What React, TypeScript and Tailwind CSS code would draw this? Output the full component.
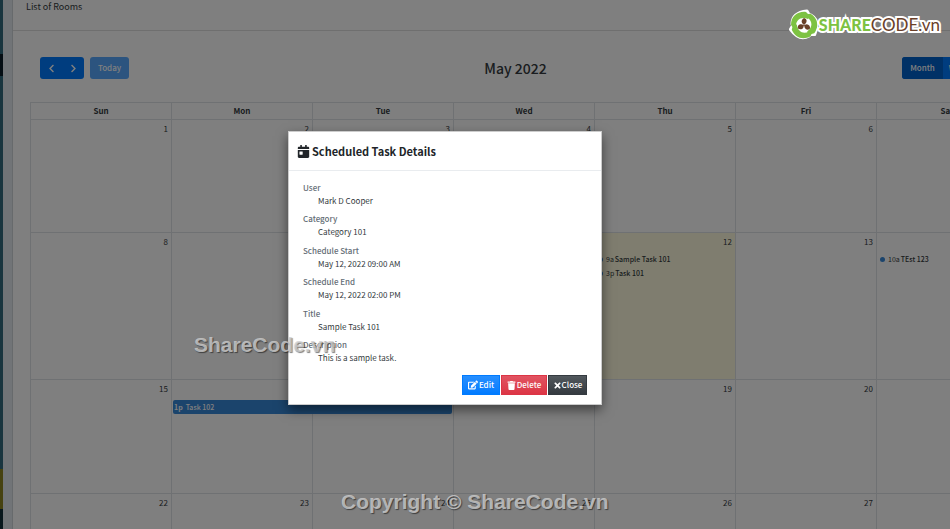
import React from "react";
import { FaCalendarDay, FaChevronLeft, FaChevronRight, FaEdit, FaTimes, FaTrash } from "react-icons/fa";

type CalendarEvent = { time: string; title: string; bar?: boolean };

const weekdays = ["Sun", "Mon", "Tue", "Wed", "Thu", "Fri", "Sat"];

const weeks = [
  { height: "h-[113px]", days: [1, 2, 3, 4, 5, 6, 7] },
  { height: "h-[147px]", days: [8, 9, 10, 11, 12, 13, 14] },
  { height: "h-[114px]", days: [15, 16, 17, 18, 19, 20, 21] },
  { height: "h-[114px]", days: [22, 23, 24, 25, 26, 27, 28] },
];

const events: Record<number, CalendarEvent[]> = {
  12: [
    { time: "9a", title: "Sample Task 101" },
    { time: "3p", title: "Task 101" },
  ],
  14: [{ time: "10a", title: "TEst 123" }],
  16: [{ time: "1p", title: "Task 102", bar: true }],
};

const today = 12;

const details = [
  ["User", "Mark D Cooper"],
  ["Category", "Category 101"],
  ["Schedule Start", "May 12, 2022 09:00 AM"],
  ["Schedule End", "May 12, 2022 02:00 PM"],
  ["Title", "Sample Task 101"],
  ["Description", "This is a sample task."],
];

function EventItem({ event }: { event: CalendarEvent }) {
  if (event.bar) {
    return (
      <a href="#task" className="absolute top-[20px] left-px z-10 flex h-[14px] w-[279px] items-center gap-[3px] rounded-[2px] bg-[#3788d8] px-px text-[7px] font-medium text-white">
        <span className="font-bold">{event.time}</span>
        <span>{event.title}</span>
      </a>
    );
  }
  return (
    <a href="#task" className="flex h-[14px] items-center gap-px pl-[3px] text-[7px] whitespace-nowrap">
      <span className="mr-[2px] size-[5px] rounded-full bg-[#3788d8]" />
      <span>{event.time}</span>
      <span className="font-medium">{event.title}</span>
    </a>
  );
}

function Calendar() {
  return (
    <table className="w-full table-fixed border-collapse border border-[#dee2e6]">
      <thead>
        <tr className="h-[17px]">
          {weekdays.map((day) => (
            <th key={day} className="border border-[#dee2e6] p-0 text-[8px] leading-3 font-bold">
              {day}
            </th>
          ))}
        </tr>
      </thead>
      <tbody>
        {weeks.map((week) => (
          <tr key={week.days[0]} className={week.height}>
            {week.days.map((day) => (
              <td key={day} className={`border border-[#dee2e6] p-0 align-top ${day === today ? "bg-[#fffadf]" : ""}`}>
                <div className="relative">
                  <div className="mb-1 px-[3px] pt-[3px] text-right text-[8px] leading-3">{day}</div>
                  {(events[day] ?? []).map((event) => (
                    <EventItem key={event.title} event={event} />
                  ))}
                </div>
              </td>
            ))}
          </tr>
        ))}
      </tbody>
    </table>
  );
}

function Toolbar() {
  return (
    <div className="flex items-center justify-between px-[10px]">
      <div className="flex gap-[6px]">
        <div className="flex h-[22px] w-[44px] overflow-hidden rounded-[3px] bg-[#007bff] text-[9px] text-white">
          <button type="button" aria-label="Previous month" className="flex flex-1 items-center justify-center">
            <FaChevronLeft />
          </button>
          <button type="button" aria-label="Next month" className="flex flex-1 items-center justify-center">
            <FaChevronRight />
          </button>
        </div>
        <button type="button" className="h-[22px] w-[39px] rounded-[3px] bg-[#007bff] text-[8px] font-medium text-white opacity-65">
          Today
        </button>
      </div>
      <h2 className="text-[14px] leading-5 font-medium">May 2022</h2>
      <div className="flex h-[22px] w-[106px] overflow-hidden rounded-[3px] bg-[#007bff] text-[8px] font-medium text-white">
        <button type="button" className="w-[41px] bg-[#0062cc]">Month</button>
        <button type="button" className="flex-1">Week</button>
        <button type="button" className="flex-1">List</button>
      </div>
    </div>
  );
}

function TaskDialog() {
  return (
    <section role="dialog" aria-labelledby="task-title" className="w-[314px] self-start border border-black/20 bg-white shadow-[0_5px_11px_rgba(0,0,0,0.5)]">
      <header className="flex h-[39px] items-center gap-[2px] border-b border-[#e9ecef] px-[8px] text-[11px] text-[#212529]">
        <FaCalendarDay className="size-[13px]" />
        <h1 id="task-title" className="font-bold">Scheduled Task Details</h1>
      </header>
      <dl className="flex h-[193px] flex-col justify-between px-[14px] pt-[10px] text-[8px] leading-[13px]">
        {details.map(([label, value]) => (
          <div key={label}>
            <dt className="font-medium text-[#646d75]">{label}</dt>
            <dd className="pl-[15px]">{value}</dd>
          </div>
        ))}
      </dl>
      <footer className="flex justify-end gap-px px-[14px] pt-[11px] pb-[9px] text-[8px] font-medium text-white">
        <button type="button" className="flex h-[20px] w-[38px] items-center justify-center gap-px border border-[#007bff] bg-linear-to-b from-[#268fff] to-[#007bff]">
          <FaEdit className="size-[10px]" />
          Edit
        </button>
        <button type="button" className="flex h-[20px] w-[46px] items-center justify-center gap-px border border-[#dc3545] bg-linear-to-b from-[#e15361] to-[#dc3545]">
          <FaTrash className="size-[9px]" />
          Delete
        </button>
        <button type="button" className="flex h-[20px] w-[39px] items-center justify-center border border-[#343a40] bg-linear-to-b from-[#52585d] to-[#343a40]">
          <FaTimes className="size-[9px]" />
          Close
        </button>
      </footer>
    </section>
  );
}

const blades = ["rotate(0)", "rotate(120)", "rotate(240)"];

function Logo() {
  return (
    <div className="absolute top-[9px] right-[10px] flex items-center">
      <svg viewBox="-15 -16 30 32" className="h-[32px] w-[30px]" aria-hidden="true">
        <circle r="13" fill="#fff" />
        {blades.map((turn) => (
          <path key={turn} transform={turn} d="M-12-1C-12-9-6-13 3-14L7-7 3-6C-3-8-7-5-7 1L-9 4Z" fill="#fff" stroke="#fff" strokeWidth="3" strokeLinejoin="round" />
        ))}
        <circle r="8" fill="#fff" />
        {blades.map((turn) => (
          <path key={turn} transform={turn} d="M-13 0C-13-9-6-14 2-13L6-9 4-6C-3-9-8-5-8 1L-10 4Z" fill="#7dc242" />
        ))}
        {blades.map((turn) => (
          <path key={turn} transform={turn} d="M0-7C3-6 3-4 2-2L0 0-2-2C-3-4-2-6 0-7Z" fill="#6b4028" />
        ))}
      </svg>
      <span className="font-[Lato,sans-serif] text-[17px] leading-6 whitespace-nowrap text-[#6b4028] [-webkit-text-stroke:4px_white] [paint-order:stroke_fill]">
        <b className="text-[16px] font-black text-[#7dc242]">SHARE</b>CODE.vn
      </span>
    </div>
  );
}

const watermark = "absolute whitespace-nowrap font-['Liberation_Sans',Arial,sans-serif] font-bold text-[21px] leading-6 text-[#d0d0d0]/80 [text-shadow:1px_1px_1px_rgba(0,0,0,0.5)]";

export default function App() {
  return (
    <div className="relative flex h-screen overflow-hidden bg-[#e2e8ee] font-['Noto_Sans_CJK_SC','Noto_Sans',sans-serif] text-[#343a40]">
      <aside className="flex w-[3px] shrink-0 flex-col bg-[#326a7e]">
        <div className="mt-[54px] h-[22px] bg-[#0b1c28]" />
        <div className="mt-auto h-[40px] bg-[#8c8420]" />
        <div className="h-[20px] bg-[#12303a]" />
      </aside>
      <main className="ml-[9px] min-w-[1020px] flex-1 border-l border-[#cfd4d8] bg-white">
        <header className="h-[31px] border-b border-[#dfdfdf] px-[13px] text-[9px] leading-[14px]">List of Rooms</header>
        <div className="ml-[17px] flex w-[988px] flex-col gap-[23px] pt-[26px]">
          <Toolbar />
          <Calendar />
        </div>
      </main>
      <div className="absolute inset-0 z-20 flex justify-center bg-black/50 pt-[131px] pr-[60px]">
        <TaskDialog />
      </div>
      <div className="pointer-events-none absolute inset-0 z-30">
        <Logo />
        <span className={`${watermark} top-[333px] left-[194px]`}>ShareCode.vn</span>
        <span className={`${watermark} top-[490px] left-[341px]`}>Copyright © ShareCode.vn</span>
      </div>
    </div>
  );
}
